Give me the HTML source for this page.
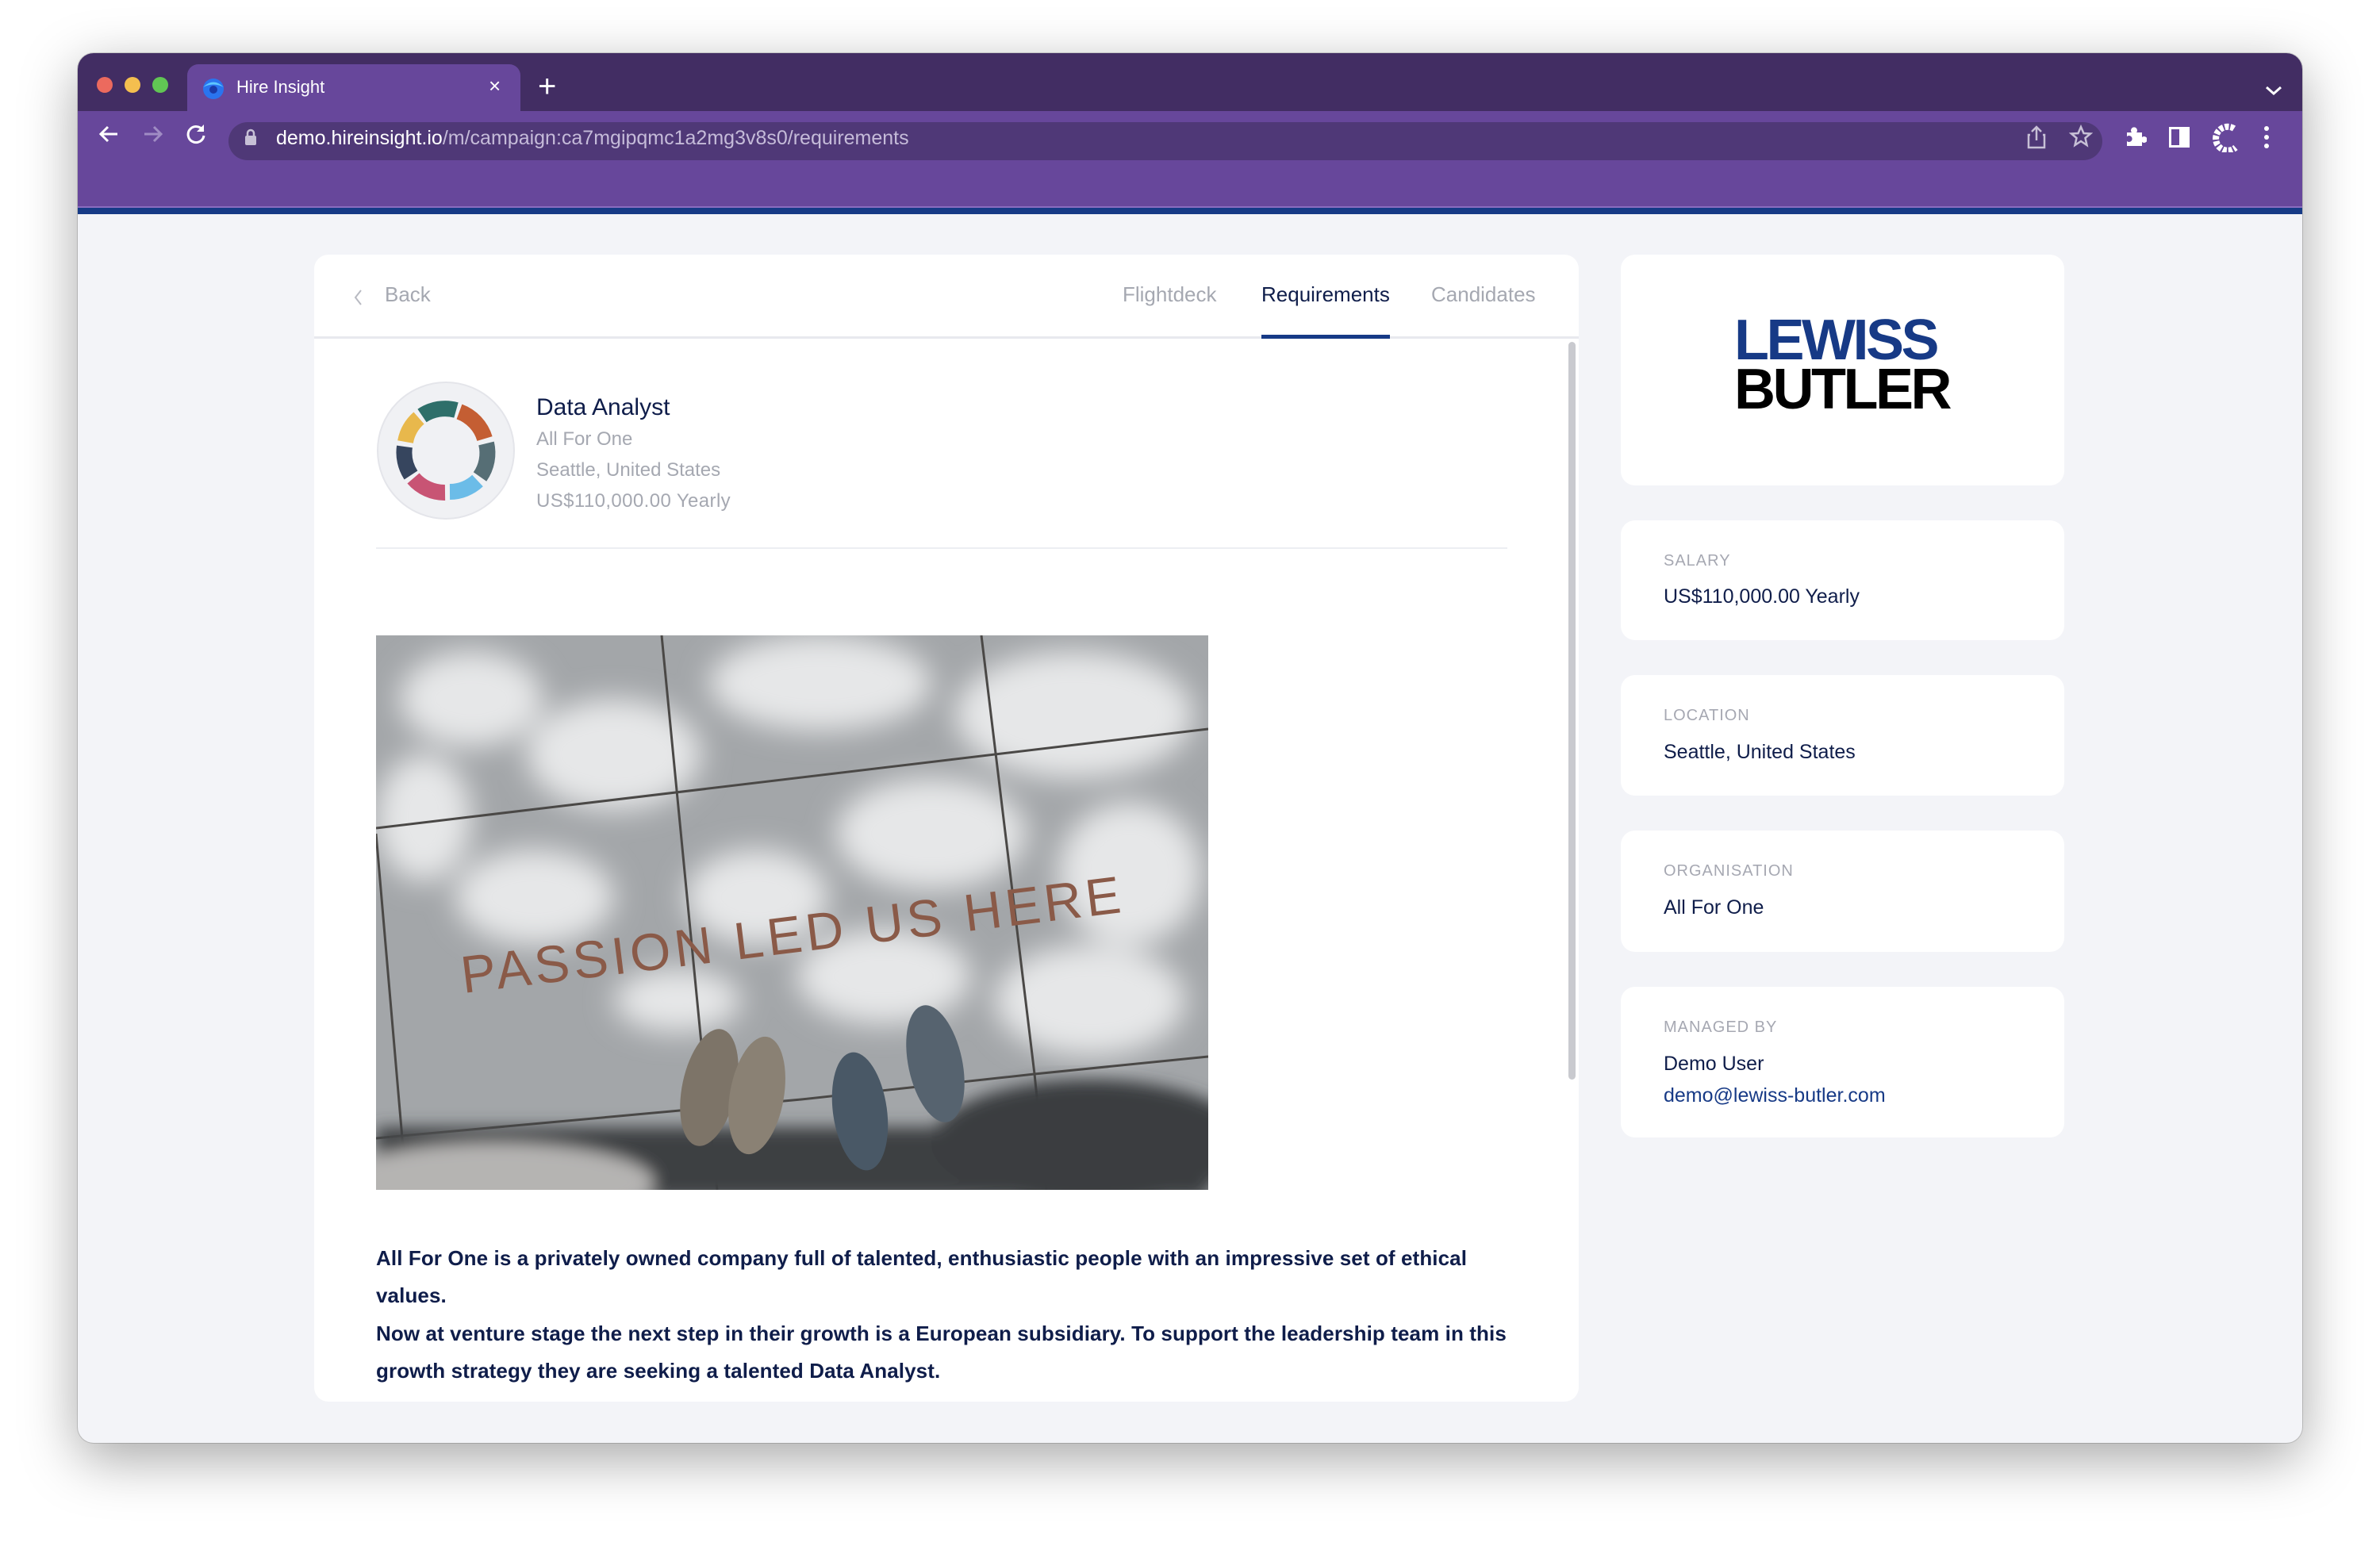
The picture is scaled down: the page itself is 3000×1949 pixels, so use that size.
<!DOCTYPE html>
<html><head><meta charset="utf-8"><style>
*{margin:0;padding:0;box-sizing:border-box}
body{width:3000px;height:1949px;background:#fff;font-family:"Liberation Sans",Arial,sans-serif;position:relative;overflow:hidden}
.win{position:absolute;left:98px;top:67px;width:2804px;height:1752px;border-radius:20px;overflow:hidden;background:#f3f4f8;box-shadow:0 20px 70px rgba(0,0,0,.35),0 0 0 1px rgba(0,0,0,.15)}
.tabbar{position:absolute;left:0;top:0;width:100%;height:73px;background:#422d63}
.toolbar{position:absolute;left:0;top:73px;width:100%;height:120px;background:#67479b}
.blue{position:absolute;left:0;top:193px;width:100%;height:10px;background:#163a86;border-top:2px solid #8a6cbf}
.dot{position:absolute;top:30px;width:20px;height:20px;border-radius:50%}
.tab{position:absolute;left:138px;top:14px;width:420px;height:60px;background:#67479b;border-radius:14px 14px 0 0}
.url{position:absolute;left:190px;top:14px;width:2362px;height:48px;border-radius:24px;background:#4f3877}
.abs{position:absolute}
.card{position:absolute;background:#fff;border-radius:18px}
.lbl{position:absolute;left:54px;font-size:20px;color:#a6a8b2;letter-spacing:1px}
.val{position:absolute;left:54px;font-size:25px;color:#0f1d4a}
.para{position:absolute;left:78px;font-size:26px;font-weight:bold;color:#0f1d4a;letter-spacing:0.1px;white-space:nowrap}
</style></head><body>
<div class="win">
 <div class="tabbar"></div>
 <div class="dot" style="left:24px;background:#ec6a5e"></div>
 <div class="dot" style="left:59px;background:#f4bf4f"></div>
 <div class="dot" style="left:94px;background:#61c554"></div>
 <div class="tab"></div>
 <svg class="abs" style="left:156px;top:30px" width="30" height="30" viewBox="0 0 30 30"><circle cx="15" cy="15" r="13" fill="#2a74ef"/><path d="M2 13 Q15 0 28 13 Q15 6 2 13Z" fill="#5ec7ff"/><circle cx="15" cy="16" r="5" fill="#1a3aa8"/></svg>
 <div class="abs" style="left:200px;top:30px;font-size:22px;color:#fff">Hire Insight</div>
 <div class="abs" style="left:518px;top:26px;font-size:26px;color:#fff">×</div>
 <div class="abs" style="left:580px;top:20px;font-size:40px;color:#fff;font-weight:300">+</div>
 <svg class="abs" style="left:2756px;top:40px" width="24" height="16"><path d="M3 3 L12 11 L21 3" stroke="#fff" stroke-width="3" fill="none"/></svg>
 <div class="toolbar">
  <svg class="abs" style="left:24px;top:14px" width="30" height="30"><path d="M26 15H5M14 6L5 15L14 24" stroke="#fff" stroke-width="3" fill="none"/></svg>
  <svg class="abs" style="left:80px;top:14px" width="30" height="30"><path d="M4 15H25M16 6L25 15L16 24" stroke="#a08cc4" stroke-width="3" fill="none"/></svg>
  <svg class="abs" style="left:134px;top:14px" width="30" height="30"><path d="M24 11A10 10 0 1 0 25 17" stroke="#fff" stroke-width="3" fill="none"/><path d="M25 3V12H16" fill="#fff"/></svg>
  <div class="url"></div>
  <svg class="abs" style="left:210px;top:22px" width="16" height="22"><rect x="1" y="9" width="14" height="12" rx="2" fill="#c7c0d6"/><path d="M4 9V6a4 4 0 0 1 8 0v3" stroke="#c7c0d6" stroke-width="2.5" fill="none"/></svg>
  <div class="abs" style="left:250px;top:20px;font-size:25px;color:#fff">demo.hireinsight.io<span style="color:#c5bbd9">/m/campaign:ca7mgipqmc1a2mg3v8s0/requirements</span></div>
  <svg class="abs" style="left:2456px;top:17px" width="26" height="32"><path d="M13 20V3M7 9L13 3L19 9M5 13H3V29H23V13H21" stroke="#c7c0d6" stroke-width="2.5" fill="none"/></svg>
  <svg class="abs" style="left:2510px;top:17px" width="30" height="30"><path d="M15 3L18.5 11L27 11.5L20.5 17L22.5 26L15 21L7.5 26L9.5 17L3 11.5L11.5 11Z" stroke="#c7c0d6" stroke-width="2.5" fill="none"/></svg>
  <svg class="abs" style="left:2580px;top:18px" width="28" height="28"><path d="M3 9H9A4 4 0 1 1 15 9H22V15A4 4 0 1 1 22 21V26H3V20A4 4 0 1 0 3 14Z" fill="#fff"/></svg>
  <svg class="abs" style="left:2636px;top:20px" width="26" height="26"><rect x="1.5" y="1.5" width="23" height="23" fill="none" stroke="#fff" stroke-width="3"/><rect x="13" y="1" width="12" height="24" fill="#fff"/></svg>
  <svg class="abs" style="left:2690px;top:14px" width="34" height="38"><path d="M28 8A15 15 0 1 0 30 32" stroke="#fff" stroke-width="8" fill="none" stroke-dasharray="5 2"/></svg>
  <svg class="abs" style="left:2754px;top:18px" width="10" height="30"><circle cx="5" cy="4" r="3" fill="#fff"/><circle cx="5" cy="15" r="3" fill="#fff"/><circle cx="5" cy="26" r="3" fill="#fff"/></svg>
 </div>
 <div class="blue"></div>
</div>

<div class="card" style="left:396px;top:321px;width:1594px;height:1446px;overflow:hidden">
 <div class="abs" style="left:0;top:103px;width:100%;height:3px;background:#e8e9ee"></div>
 <svg class="abs" style="left:48px;top:42px" width="14" height="24"><path d="M11 3L4 12L11 21" stroke="#b8bac2" stroke-width="2" fill="none"/></svg>
 <div class="abs" style="left:89px;top:35px;font-size:26px;color:#a5a8b1">Back</div>
 <div class="abs" style="left:1019px;top:35px;font-size:26px;color:#a5a8b1">Flightdeck</div>
 <div class="abs" style="left:1194px;top:35px;font-size:26px;color:#0f1d4a">Requirements</div>
 <div class="abs" style="left:1194px;top:101px;width:162px;height:5px;background:#163a86"></div>
 <div class="abs" style="left:1408px;top:35px;font-size:26px;color:#a5a8b1">Candidates</div>
 <div class="abs" style="left:1581px;top:110px;width:9px;height:930px;border-radius:5px;background:#c9cacf"></div>
 <div class="abs" style="left:79px;top:160px;width:174px;height:174px;border-radius:50%;background:#f0f1f4;border:2px solid #e4e5ea"></div>
 <svg class="abs" style="left:79px;top:160px" width="174" height="174" viewBox="0 0 174 174">
  <g fill="none" stroke-width="20">
   <path d="M57 43 A52 52 0 0 1 100 36" stroke="#2e6f6a"/>
   <path d="M104 38 A52 52 0 0 1 136 72" stroke="#c45e33"/>
   <path d="M138 78 A52 52 0 0 1 130 120" stroke="#566e75"/>
   <path d="M127 125 A52 52 0 0 1 92 139" stroke="#6bbce8"/>
   <path d="M86 140 A52 52 0 0 1 46 122" stroke="#c85474"/>
   <path d="M43 118 A52 52 0 0 1 35 82" stroke="#36455e"/>
   <path d="M36 76 A52 52 0 0 1 53 46" stroke="#e8b84c"/>
  </g>
 </svg>
 <div class="abs" style="left:280px;top:176px;font-size:30px;color:#0f1d4a">Data Analyst</div>
 <div class="abs" style="left:280px;top:219px;font-size:24px;color:#a5a8b1">All For One</div>
 <div class="abs" style="left:280px;top:258px;font-size:24px;color:#a5a8b1">Seattle, United States</div>
 <div class="abs" style="left:280px;top:297px;font-size:24px;color:#a5a8b1;letter-spacing:0.4px">US$110,000.00 Yearly</div>
 <div class="abs" style="left:78px;top:369px;width:1426px;height:2px;background:#eceef2"></div>
 <svg class="abs" style="left:78px;top:480px" width="1049" height="699" viewBox="0 0 1049 699">
  <defs><filter id="b" x="-20%" y="-20%" width="140%" height="140%"><feGaussianBlur stdDeviation="18"/></filter><filter id="b2"><feGaussianBlur stdDeviation="10"/></filter></defs>
  <rect width="1049" height="699" fill="#a3a6a9"/>
  <g filter="url(#b)" fill="#e6e7e8">
   <ellipse cx="120" cy="80" rx="90" ry="60"/><ellipse cx="300" cy="150" rx="110" ry="70"/><ellipse cx="560" cy="60" rx="140" ry="60"/>
   <ellipse cx="880" cy="100" rx="150" ry="80"/><ellipse cx="700" cy="250" rx="120" ry="70"/><ellipse cx="950" cy="300" rx="90" ry="90"/>
   <ellipse cx="200" cy="330" rx="100" ry="60"/><ellipse cx="480" cy="330" rx="90" ry="60"/><ellipse cx="640" cy="430" rx="110" ry="60"/>
   <ellipse cx="900" cy="460" rx="120" ry="70"/><ellipse cx="60" cy="230" rx="60" ry="80"/><ellipse cx="380" cy="460" rx="80" ry="40"/>
  </g>
  <g stroke="#4a4846" stroke-width="3" fill="none">
   <path d="M360 0 L409 504 L430 699"/><path d="M763 0 L830 553 L845 699"/><path d="M0 250 L33 634 L40 699"/>
   <path d="M0 243 L1049 118"/><path d="M0 634 L536 585 L830 553 L1049 531"/>
  </g>
  <text x="110" y="451" transform="rotate(-7 110 451)" font-family="Liberation Sans, sans-serif" font-size="66" fill="#8a5a48" letter-spacing="5">PASSION LED US HERE</text>
  <g filter="url(#b2)">
   <rect x="0" y="620" width="1049" height="90" fill="#3c3f42"/>
   <ellipse cx="150" cy="690" rx="200" ry="50" fill="#b5b4b2"/>
   <ellipse cx="900" cy="640" rx="200" ry="80" fill="#3a3d40"/>
  </g>
  <ellipse cx="420" cy="570" rx="34" ry="75" fill="#7d7468" transform="rotate(12 420 570)"/>
  <ellipse cx="480" cy="580" rx="34" ry="75" fill="#8a8174" transform="rotate(10 480 580)"/>
  <ellipse cx="610" cy="600" rx="34" ry="75" fill="#495866" transform="rotate(-8 610 600)"/>
  <ellipse cx="705" cy="540" rx="34" ry="75" fill="#56636f" transform="rotate(-12 705 540)"/>
 </svg>
 <div class="para" style="top:1250px">All For One is a privately owned company full of talented, enthusiastic people with an impressive set of ethical</div>
 <div class="para" style="top:1297px">values.</div>
 <div class="para" style="top:1345px">Now at venture stage the next step in their growth is a European subsidiary. To support the leadership team in this</div>
 <div class="para" style="top:1392px">growth strategy they are seeking a talented Data Analyst.</div>
</div>

<div class="card" style="left:2043px;top:321px;width:559px;height:291px">
 <div class="abs" style="left:143px;top:78px;font-size:72px;font-weight:bold;color:#173a86;letter-spacing:-3.5px;line-height:60px">LEWISS</div>
 <div class="abs" style="left:143px;top:140px;font-size:72px;font-weight:bold;color:#000;letter-spacing:-3.5px;line-height:60px">BUTLER</div>
</div>
<div class="card" style="left:2043px;top:656px;width:559px;height:151px">
 <div class="lbl" style="top:40px">SALARY</div>
 <div class="val" style="top:82px">US$110,000.00 Yearly</div>
</div>
<div class="card" style="left:2043px;top:851px;width:559px;height:152px">
 <div class="lbl" style="top:40px">LOCATION</div>
 <div class="val" style="top:83px">Seattle, United States</div>
</div>
<div class="card" style="left:2043px;top:1047px;width:559px;height:153px">
 <div class="lbl" style="top:40px">ORGANISATION</div>
 <div class="val" style="top:83px">All For One</div>
</div>
<div class="card" style="left:2043px;top:1244px;width:559px;height:190px">
 <div class="lbl" style="top:40px">MANAGED BY</div>
 <div class="val" style="top:83px">Demo User</div>
 <div class="val" style="top:123px;color:#173a86">demo@lewiss-butler.com</div>
</div>
</body></html>
